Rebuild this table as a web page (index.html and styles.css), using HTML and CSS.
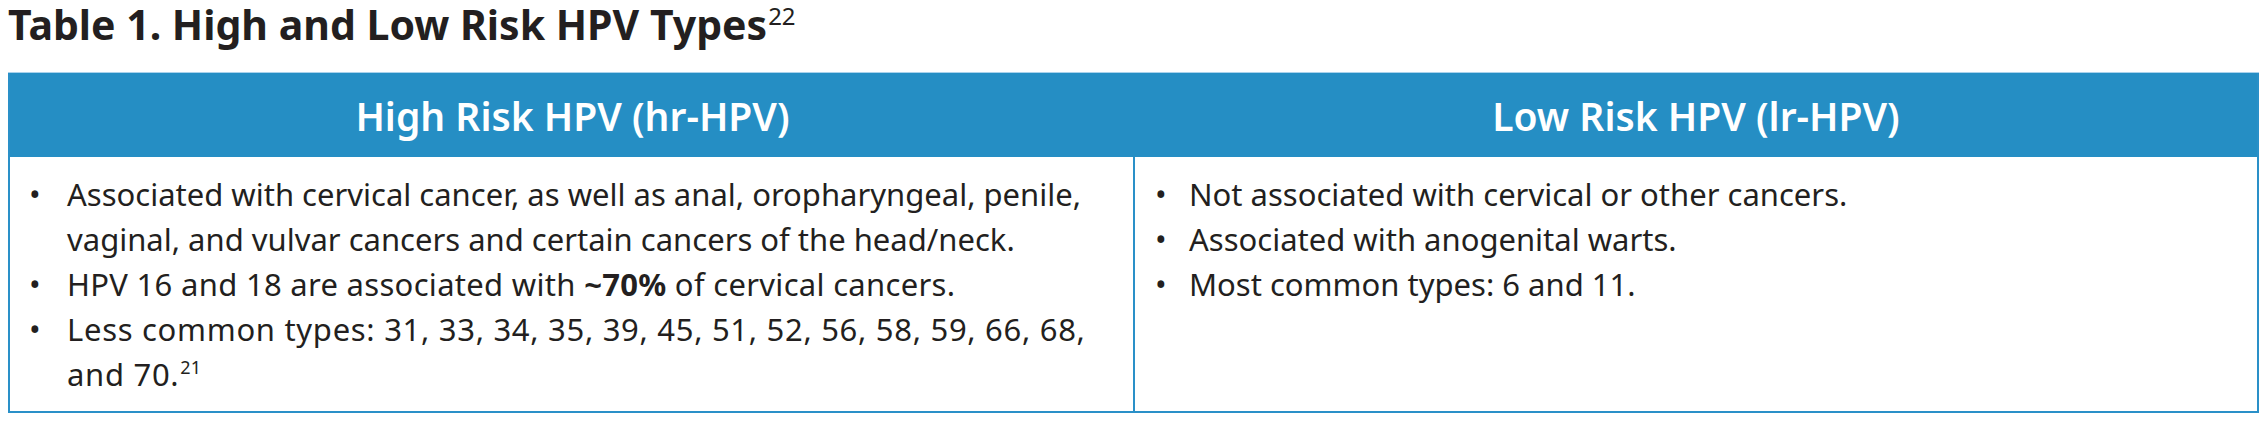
FILE: index.html
```html
<!DOCTYPE html>
<html lang="en">
<head>
<meta charset="utf-8">
<title>Table 1. High and Low Risk HPV Types</title>
<link rel="stylesheet" href="styles.css">
</head>
<body>
<main class="page">
  <h1 class="title">Table 1. High and Low Risk HPV Types<sup class="title-ref">22</sup></h1>
  <div class="hpv-table">
    <div class="head">High Risk HPV (hr-HPV)</div>
    <div class="head">Low Risk HPV (lr-HPV)</div>
    <div class="cell cell-left">
      <ul class="list">
        <li><span class="item-text">Associated with cervical cancer, as well as anal, oropharyngeal, penile, vaginal, and vulvar cancers and certain cancers of the head/neck.</span></li>
        <li><span class="item-text item-mid">HPV 16 and 18 are associated with <strong>~70%</strong> of cervical cancers.</span></li>
        <li><span class="item-text item-numbers">Less common types: 31, 33, 34, 35, 39, 45, 51, 52, 56, 58, 59, 66, 68, and 70.<sup class="ref">21</sup></span></li>
      </ul>
    </div>
    <div class="cell cell-right">
      <ul class="list">
        <li><span class="item-text">Not associated with cervical or other cancers.</span></li>
        <li><span class="item-text">Associated with anogenital warts.</span></li>
        <li><span class="item-text">Most common types: 6 and 11.</span></li>
      </ul>
    </div>
  </div>
</main>
</body>
</html>
```

FILE: styles.css
```css
html, body {
  margin: 0;
  padding: 0;
  background: #ffffff;
}

body {
  font-family: "Noto Sans", "Open Sans", "Liberation Sans", sans-serif;
  color: #231f20;
}

.page {
  padding: 0 9px 0 8px;
}

.title {
  margin: 0 0 25px 0;
  font-size: 41px;
  line-height: 48px;
  font-weight: 700;
  letter-spacing: 0;
}

.title-ref {
  font-size: 24px;
  font-weight: 400;
  vertical-align: 15px;
  line-height: 0;
  margin-left: 1px;
}

.hpv-table {
  display: grid;
  grid-template-columns: 1125px 1fr;
  border-left: 2px solid #2a90c8;
  border-right: 2px solid #2a90c8;
  border-bottom: 2px solid #2a90c8;
  box-shadow: 0 -1px 0 #a9d2ec;
}

.head {
  background: #258ec4;
  color: #ffffff;
  height: 84px;
  display: flex;
  align-items: center;
  justify-content: center;
  font-size: 39px;
  font-weight: 600;
}

.cell {
  padding: 15px 40px 14px 0;
}

.cell-left {
  border-right: 2px solid #2a90c8;
}

.list {
  list-style: none;
  margin: 0;
  padding: 0;
  font-size: 31px;
  line-height: 45px;
}

.list li {
  display: flex;
}

.list li::before {
  content: "\2022";
  flex: none;
  width: 38px;
  padding-left: 19px;
}

.cell-right .list li::before {
  width: 34px;
  padding-left: 20px;
}

.item-text {
  flex: 1;
  min-width: 0;
}

.item-mid {
  letter-spacing: 0.3px;
}

.item-numbers {
  letter-spacing: 0.7px;
}

.ref {
  font-size: 18px;
  line-height: 18px;
  vertical-align: 12px;
  margin-left: 1px;
  letter-spacing: 0;
}
```
